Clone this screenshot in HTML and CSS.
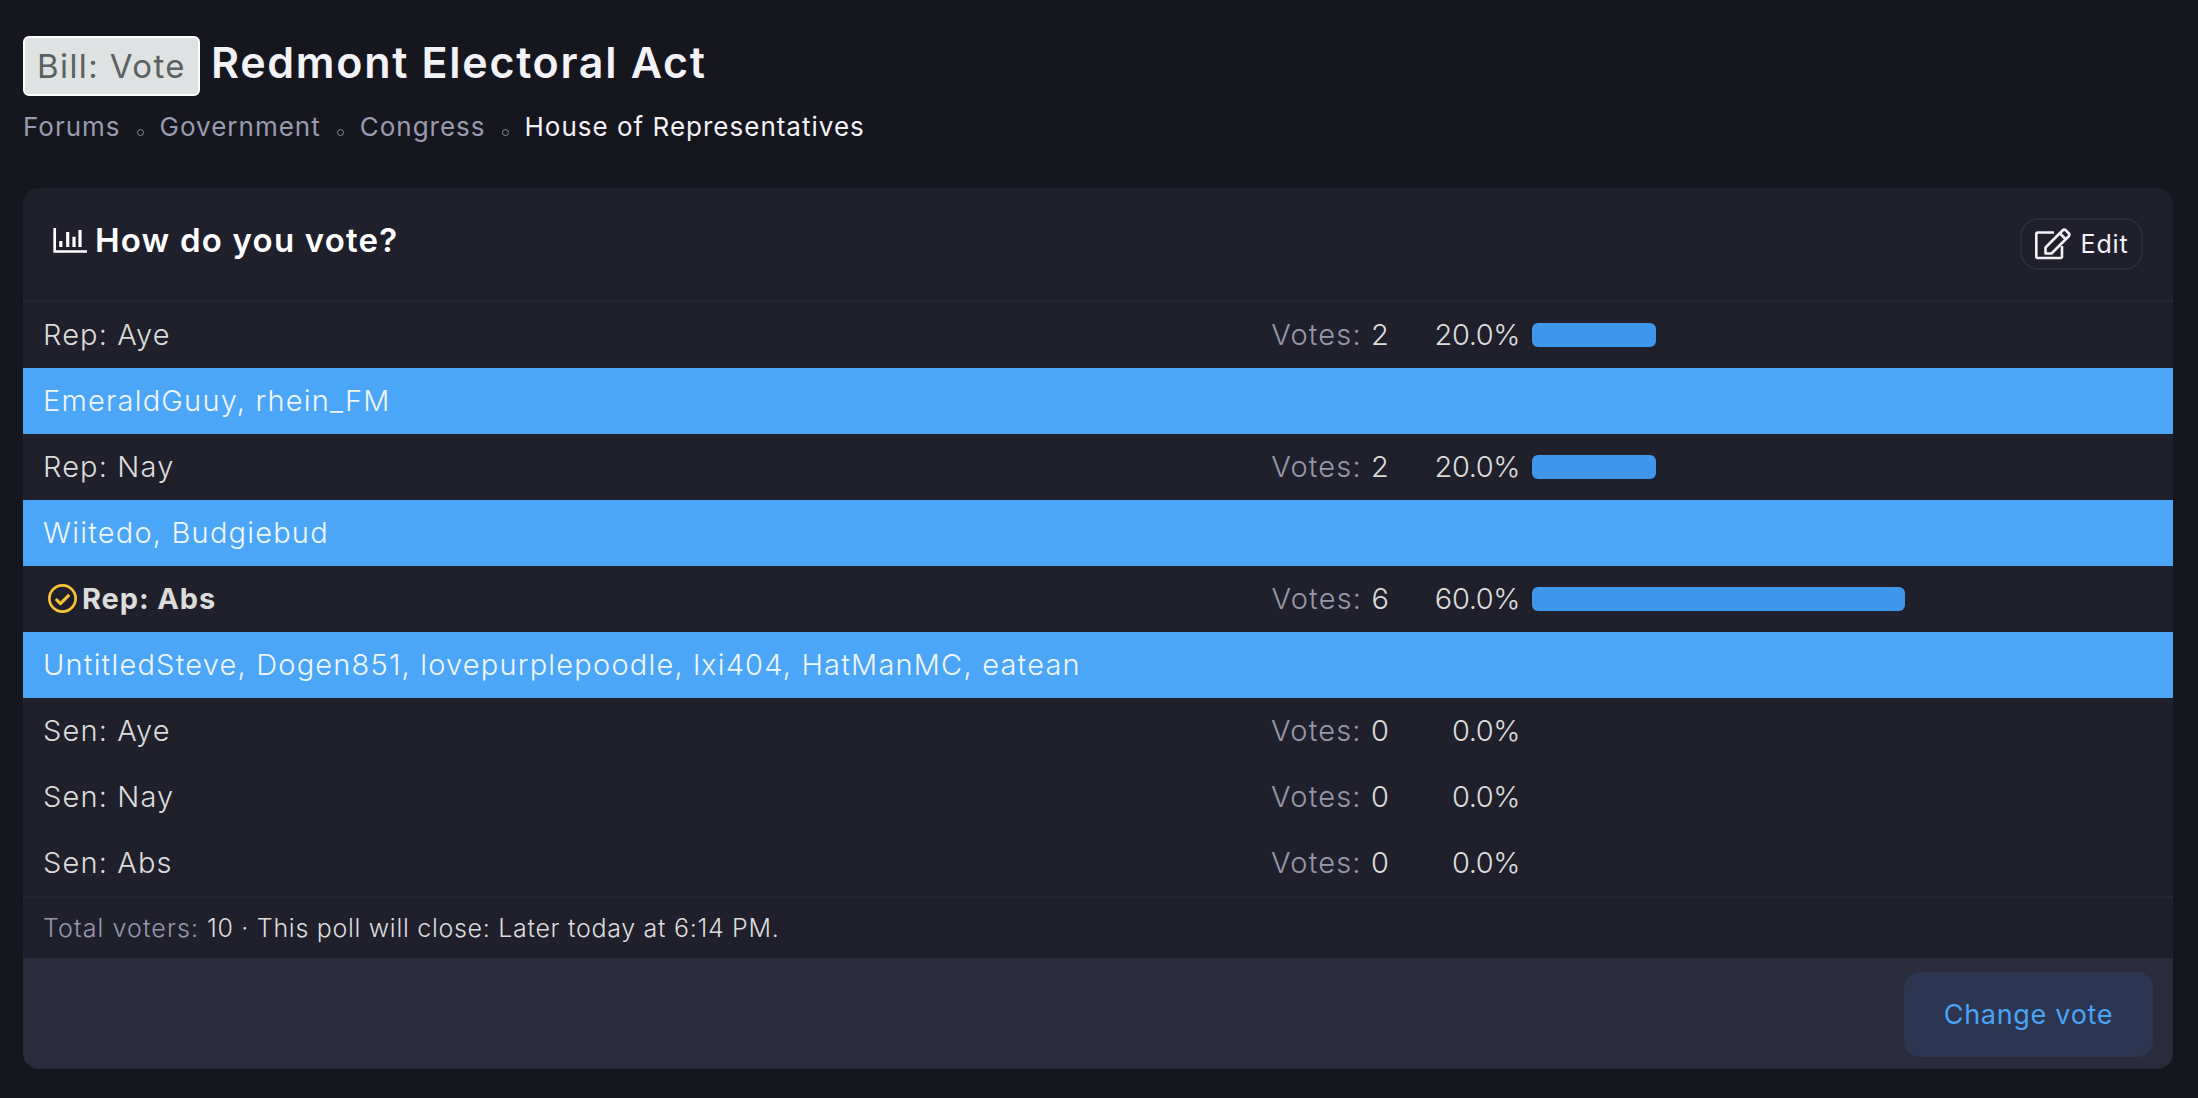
FILE: index.html
```html
<!DOCTYPE html>
<html lang="en">
<head>
  <meta charset="UTF-8" />
  <title>Redmont Electoral Act</title>
  <link rel="stylesheet" href="styles.css">
</head>
<body>

  <header class="page-head">
    <h1><span class="prefix">Bill: Vote</span> <span class="title">Redmont Electoral Act</span></h1>
    <ul class="crumbs">
      <li><a href="#">Forums</a></li>
      <li><a href="#">Government</a></li>
      <li><a href="#">Congress</a></li>
      <li class="current"><a href="#">House of Representatives</a></li>
    </ul>
  </header>

  <section class="poll">
    <div class="poll-head">
      <h2>
        <svg class="icon-chart" viewBox="0 0 34 26" fill="none" stroke="currentColor">
          <path d="M1.700 1v23.500H34" stroke-width="2.700" />
          <path d="M7.800 14v6M14.700 5v15M21 9.700V20M27 3v17" stroke-width="3.200" />
        </svg>
        How do you vote?
      </h2>
      <a class="edit-btn" href="#">
        <svg class="icon-edit" viewBox="0 0 36 32" fill="none" stroke="currentColor" stroke-width="2.600" stroke-linejoin="round">
          <path d="M19 4.500H2.800a1.500 1.500 0 0 0-1.500 1.500V28.500A1.500 1.500 0 0 0 2.800 30H25.500a1.500 1.500 0 0 0 1.500-1.500V18" />
          <path d="M10.500 19.500L27.500 2.500a2.500 2.500 0 0 1 3.500 0l2.500 2.500a2.500 2.500 0 0 1 0 3.500L16.500 25.500H10.500z" />
          <path d="M25 5.500l6 6" />
        </svg>
        Edit
      </a>
    </div>

    <div class="poll-body">
      <div class="option">
        <div class="option-label">Rep: Aye</div>
        <div class="votes"><span>Votes:</span> 2</div>
        <div class="percent">20.0%</div>
        <div class="bar-cell"><div class="bar" style="width: 20%"></div></div>
      </div>
      <div class="voters">EmeraldGuuy, rhein_FM</div>

      <div class="option">
        <div class="option-label">Rep: Nay</div>
        <div class="votes"><span>Votes:</span> 2</div>
        <div class="percent">20.0%</div>
        <div class="bar-cell"><div class="bar" style="width: 20%"></div></div>
      </div>
      <div class="voters">Wiitedo, Budgiebud</div>

      <div class="option chosen">
        <div class="option-label">
          <svg class="icon-check" viewBox="0 0 30 30" fill="none" stroke="currentColor" stroke-width="2.600">
            <circle cx="15" cy="15" r="12.700" />
            <path d="M8.500 15.500l4.500 4.500 8.500-8.500" stroke-width="3" stroke-linejoin="round" />
          </svg>
          Rep: Abs
        </div>
        <div class="votes"><span>Votes:</span> 6</div>
        <div class="percent">60.0%</div>
        <div class="bar-cell"><div class="bar" style="width: 60%"></div></div>
      </div>
      <div class="voters">UntitledSteve, Dogen851, lovepurplepoodle, lxi404, HatManMC, eatean</div>

      <div class="option">
        <div class="option-label">Sen: Aye</div>
        <div class="votes"><span>Votes:</span> 0</div>
        <div class="percent">0.0%</div>
        <div class="bar-cell"></div>
      </div>
      <div class="option">
        <div class="option-label">Sen: Nay</div>
        <div class="votes"><span>Votes:</span> 0</div>
        <div class="percent">0.0%</div>
        <div class="bar-cell"></div>
      </div>
      <div class="option">
        <div class="option-label">Sen: Abs</div>
        <div class="votes"><span>Votes:</span> 0</div>
        <div class="percent">0.0%</div>
        <div class="bar-cell"></div>
      </div>
    </div>

    <div class="poll-info"><span>Total voters:</span> 10 · This poll will close: Later today at 6:14 PM.</div>

    <div class="poll-actions">
      <a class="change-btn" href="#">Change vote</a>
    </div>
  </section>

</body>
</html>
```

FILE: styles.css
```css
body {
  font-family: 'Inter', 'Open Sans', sans-serif;
  margin: 0;
  padding: 36px 25px 29px 23px;
  background: #16161f;
  color: #dcdcdc;
}

.page-head h1 {
  margin: 0;
  display: flex;
  align-items: center;
  gap: 11px;
  font-size: 43px;
  font-weight: 600;
  letter-spacing: 1.7px;
  color: #f2f2f7;
}

.title {
  margin-bottom: 8px;
}

.prefix {
  box-sizing: border-box;
  display: flex;
  align-items: center;
  justify-content: center;
  width: 177px;
  height: 60px;
  font-size: 33px;
  font-weight: 400;
  letter-spacing: 1.4px;
  color: #5a6160;
  background: #dfe2e3;
  border: 2px solid #fff;
  border-radius: 6px;
}

.crumbs {
  list-style: none;
  margin: 11px 0 0;
  padding: 0;
  display: flex;
  gap: 16px;
  font-size: 26px;
  letter-spacing: 1px;
  line-height: 40px;
}

.crumbs li {
  display: flex;
  align-items: center;
  gap: 16px;
}

.crumbs li:not(:last-child)::after {
  content: "";
  width: 7px;
  height: 7px;
  margin-top: 10px;
  border: 1px solid #8a8a9e;
  border-radius: 50%;
  box-sizing: border-box;
}

.crumbs a {
  color: #9a9ab0;
  text-decoration: none;
}

.crumbs .current a {
  color: #f2f2f7;
}

.poll {
  margin-top: 41px;
  background: #20202d;
  border-radius: 16px;
  overflow: hidden;
}

.poll-head {
  height: 112px;
  padding: 0 30px;
  display: flex;
  align-items: center;
  justify-content: space-between;
  border-bottom: 2px solid #252533;
}

.poll-head h2 {
  margin: 0 0 9px;
  display: flex;
  align-items: center;
  gap: 8px;
  font-size: 33px;
  font-weight: 600;
  letter-spacing: 1.2px;
  color: #fff;
}

.icon-chart {
  width: 34px;
  height: 26px;
}

.edit-btn {
  box-sizing: border-box;
  width: 123px;
  height: 52px;
  margin-bottom: 1px;
  display: flex;
  align-items: center;
  justify-content: center;
  gap: 10px;
  color: #f2f2f7;
  font-size: 25px;
  letter-spacing: 0.8px;
  text-decoration: none;
  border: 2px solid #2b2b3d;
  border-radius: 18px;
}

.icon-edit {
  width: 36px;
  height: 32px;
}

.option {
  box-sizing: border-box;
  height: 66px;
  padding: 0 20px 2px;
  display: flex;
  align-items: center;
  font-size: 29px;
  font-weight: 300;
  letter-spacing: 1.15px;
}

.option-label {
  flex: 1;
  display: flex;
  align-items: center;
  gap: 4px;
}

.chosen .option-label {
  font-weight: 700;
  letter-spacing: 0.9px;
}

.icon-check {
  width: 31px;
  height: 31px;
  margin-left: 4px;
  color: #f7c235;
}

.votes {
  width: 200px;
  text-align: right;
}

.votes span {
  color: #9898ac;
}

.percent {
  width: 130px;
  text-align: right;
  letter-spacing: -0.4px;
}

.bar-cell {
  width: 621px;
  margin-left: 12px;
}

.bar {
  height: 24px;
  margin-top: 2px;
  background: #4096eb;
  border-radius: 6px;
}

.voters {
  box-sizing: border-box;
  height: 66px;
  padding: 0 20px 2px;
  display: flex;
  align-items: center;
  background: #4ba6f8;
  color: #f0f6fd;
  font-size: 29px;
  font-weight: 300;
  letter-spacing: 1.2px;
}

.poll-info {
  height: 60px;
  padding: 0 20px;
  display: flex;
  align-items: center;
  white-space: pre;
  font-size: 25px;
  font-weight: 300;
  letter-spacing: 0.7px;
  border-top: 2px solid #252533;
}

.poll-info span {
  color: #9898ac;
  letter-spacing: 1.1px;
}

.poll-actions {
  padding: 14px 20px 12px;
  display: flex;
  justify-content: flex-end;
  background: #2b2b3e;
}

.change-btn {
  width: 249px;
  height: 85px;
  display: flex;
  align-items: center;
  justify-content: center;
  color: #4aa3f5;
  background: #2c3651;
  font-size: 27px;
  letter-spacing: 0.7px;
  text-decoration: none;
  border-radius: 16px;
}
```
